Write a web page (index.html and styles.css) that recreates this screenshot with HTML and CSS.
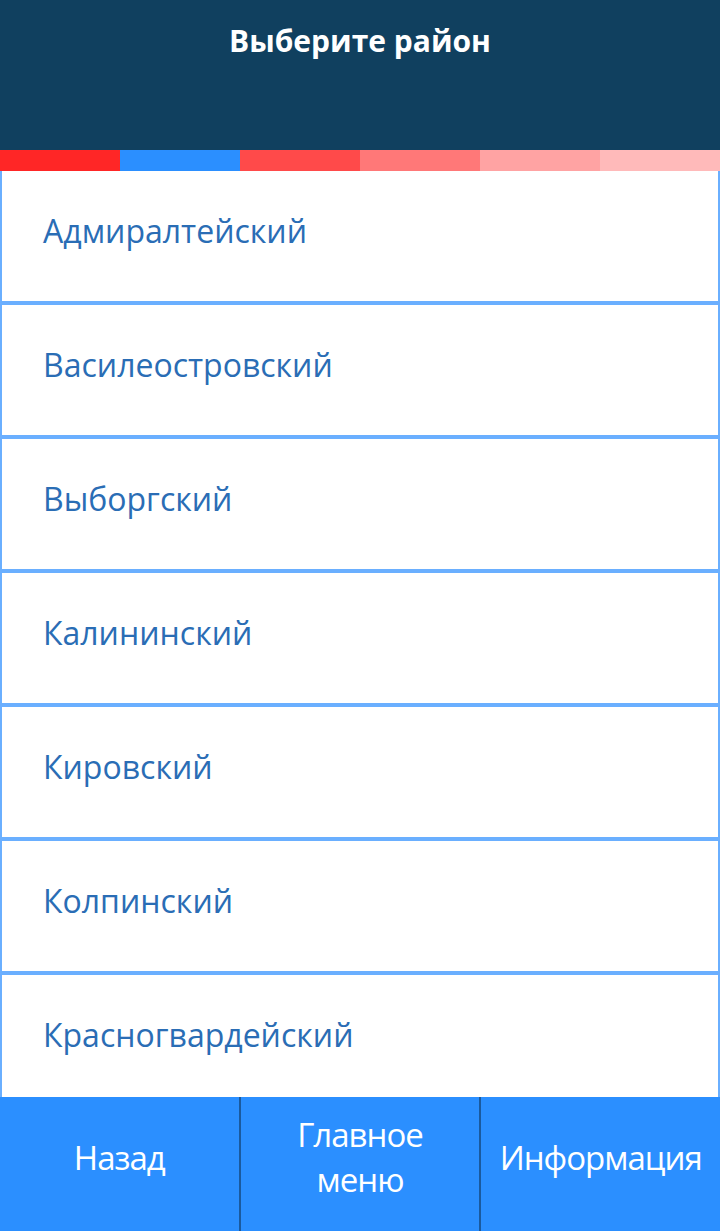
FILE: index.html
```html
<!DOCTYPE html>
<html lang="ru">
<head>
<meta charset="utf-8">
<title>Выберите район</title>
<link rel="stylesheet" href="styles.css">
</head>
<body>
<div class="app">
  <header class="topbar">
    <h1 class="title">Выберите район</h1>
  </header>
  <div class="stripes">
    <span class="s s1"></span><span class="s s2"></span><span class="s s3"></span><span class="s s4"></span><span class="s s5"></span><span class="s s6"></span>
  </div>
  <ul class="list">
    <li class="item">Адмиралтейский</li>
    <li class="item">Василеостровский</li>
    <li class="item">Выборгский</li>
    <li class="item">Калининский</li>
    <li class="item">Кировский</li>
    <li class="item">Колпинский</li>
    <li class="item">Красногвардейский</li>
  </ul>
  <nav class="footer">
    <div class="btn">Назад</div>
    <div class="btn">Главное<br>меню</div>
    <div class="btn">Информация</div>
  </nav>
</div>
</body>
</html>
```
FILE: styles.css
```css
html, body {
  margin: 0;
  padding: 0;
}
body {
  font-family: "Open Sans", "Noto Sans", sans-serif;
  background: #ffffff;
}
.app {
  width: 720px;
  height: 1231px;
  display: flex;
  flex-direction: column;
  overflow: hidden;
}
.topbar {
  height: 150px;
  background: #10405f;
  display: flex;
  justify-content: center;
  flex-shrink: 0;
}
.title {
  margin: 0;
  padding-top: 19px;
  color: #ffffff;
  font-size: 30px;
  font-weight: 700;
  line-height: 44px;
  letter-spacing: 0;
}
.stripes {
  height: 21px;
  display: flex;
  flex-shrink: 0;
}
.s { flex: 1; }
.s1 { background: #ff2626; }
.s2 { background: #2b8fff; }
.s3 { background: #ff4a4a; }
.s4 { background: #ff7878; }
.s5 { background: #ffa3a3; }
.s6 { background: #ffbaba; }
.list {
  list-style: none;
  margin: 0;
  padding: 0;
  flex: 1;
  overflow: hidden;
  border-left: 2px solid #6aafff;
  border-right: 2px solid #6aafff;
  background: #6aafff;
  display: flex;
  flex-direction: column;
  gap: 4px;
}
.item {
  flex: 0 0 130px;
  background: #ffffff;
  color: #2a6db5;
  font-size: 32px;
  letter-spacing: 0;
  padding-left: 41px;
  display: flex;
  align-items: center;
  box-sizing: border-box;
  padding-bottom: 12px;
}
.footer {
  height: 134px;
  flex-shrink: 0;
  background: #2b8fff;
  display: flex;
}
.btn {
  flex: 1;
  display: flex;
  align-items: center;
  justify-content: center;
  text-align: center;
  color: #ffffff;
  font-size: 33px;
  line-height: 45px;
  letter-spacing: -1px;
  padding-bottom: 14px;
}
.btn + .btn {
  border-left: 2px solid #1a5a9e;
}
```
